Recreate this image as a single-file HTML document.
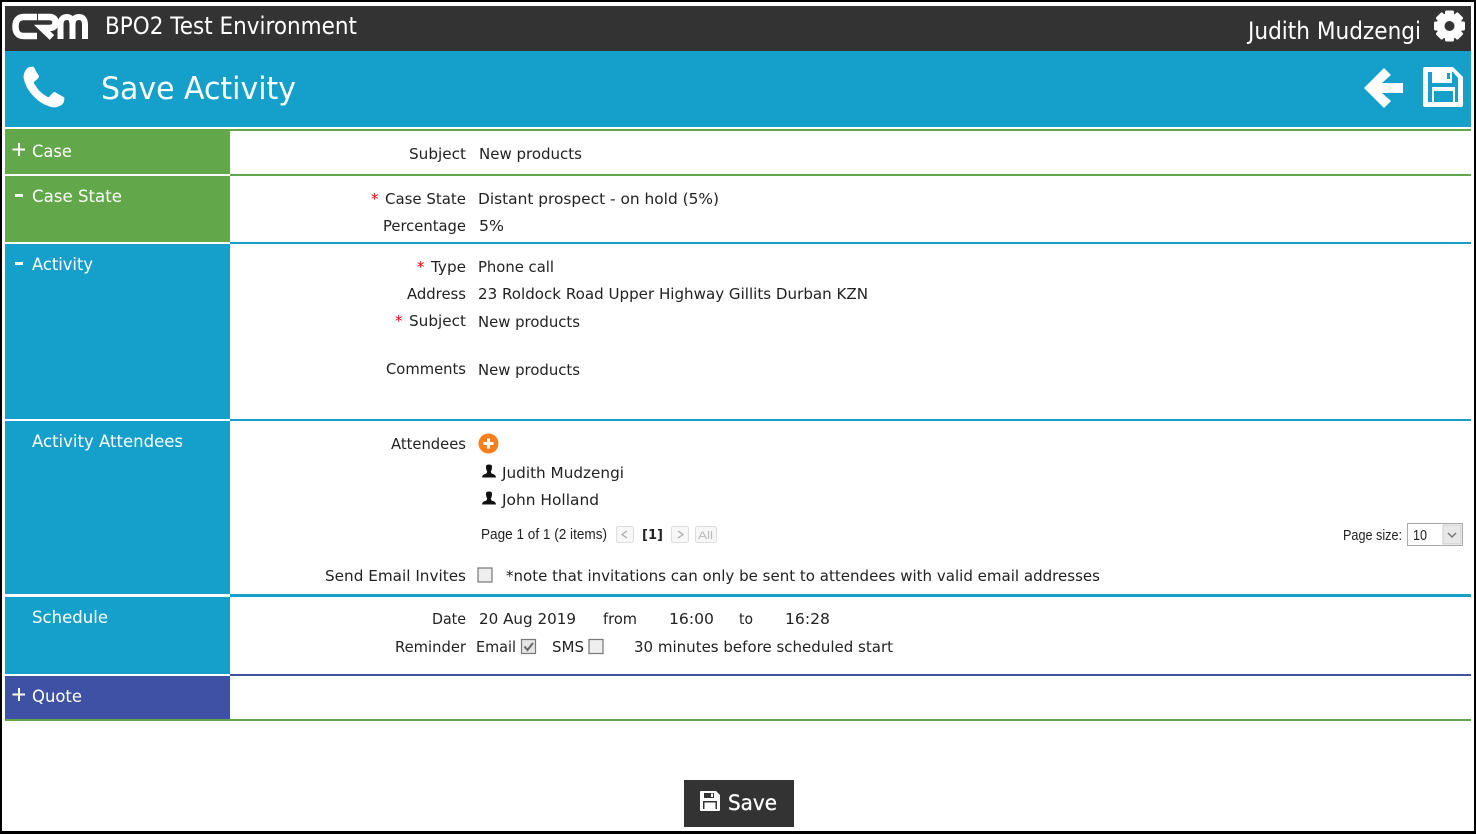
<!DOCTYPE html>
<html lang="en">
<head>
<meta charset="utf-8">
<title>Save Activity</title>
<style>
html,body{margin:0;padding:0;background:#fff;width:1476px;height:834px;overflow:hidden}
svg{display:block}
text{font-family:"DejaVu Sans",Verdana,sans-serif;font-size:14.8px;fill:#222}
.l{font-size:16.5px;fill:#fff}
.r{fill:#e00}
.n{font-family:"Liberation Sans",Arial,sans-serif;font-size:14.5px;fill:#222}
</style>
</head>
<body>
<svg width="1476" height="834" viewBox="0 0 1476 834" xmlns="http://www.w3.org/2000/svg">
<rect width="1476" height="834" fill="#000"/>
<rect x="2" y="2" width="1472" height="829" fill="#fff"/>
<rect x="5" y="6" width="1466" height="45" fill="#333"/>
<rect x="5" y="51" width="1466" height="76" fill="#15a0cb"/>

<!-- logo -->
<g fill="none" stroke="#fff" stroke-width="6.5">
<path d="M37 17H24Q15.500 17 15.500 26.500Q15.500 36 24 36H37"/>
<path d="M38 17H49Q55.500 17 55.500 22.500Q55.500 28 49 28H42L52 37.500"/>
<path d="M60.500 39V25Q60.500 17 67 17Q72.500 17 72.500 25V39M72.500 25Q72.500 17 79 17Q85 17 85 25V39" stroke-width="6"/>
</g>

<text x="105" y="34" style="font-size:24px;fill:#fff" textLength="252" lengthAdjust="spacingAndGlyphs">BPO2 Test Environment</text>
<text x="1248" y="39" style="font-size:24px;fill:#fff" textLength="173" lengthAdjust="spacingAndGlyphs">Judith Mudzengi</text>

<!-- gear -->
<g transform="translate(1449.500 26)" fill="#fff">
<circle r="9" fill="none" stroke="#fff" stroke-width="8"/>
<rect x="-4.500" y="-15.500" width="9" height="8" rx="1.500"/>
<rect x="-4.500" y="-15.500" width="9" height="8" rx="1.500" transform="rotate(45)"/>
<rect x="-4.500" y="-15.500" width="9" height="8" rx="1.500" transform="rotate(90)"/>
<rect x="-4.500" y="-15.500" width="9" height="8" rx="1.500" transform="rotate(135)"/>
<rect x="-4.500" y="-15.500" width="9" height="8" rx="1.500" transform="rotate(180)"/>
<rect x="-4.500" y="-15.500" width="9" height="8" rx="1.500" transform="rotate(225)"/>
<rect x="-4.500" y="-15.500" width="9" height="8" rx="1.500" transform="rotate(270)"/>
<rect x="-4.500" y="-15.500" width="9" height="8" rx="1.500" transform="rotate(315)"/>
</g>

<!-- phone -->
<path transform="translate(24 67) scale(.0284)" fill="#fff" stroke="#fff" stroke-width="30" d="M1408 1112q0 27-10 70.500t-21 68.500q-21 50-122 106-94 51-186 51-27 0-53-3.500t-57.500-12.500-47-14.500-55.500-20.500-49-18q-98-35-175-83-127-79-264-216t-216-264q-48-77-83-175-3-9-18-49t-20.500-55.500-14.500-47-12.500-57.500-3.500-53q0-92 51-186 56-101 106-122 25-11 68.500-21t70.500-10q14 0 21 3 18 6 53 76 11 19 30 54t35 63.500 31 53.500q3 4 17.500 25t21.500 35.500 7 28.500q0 20-28.500 50t-62 55-62 53-28.500 46q0 9 5 22.500t8.500 20.500 14 24 11.500 19q76 137 174 235t235 174q2 1 19 11.500t24 14 20.500 8.500 22.500 5q18 0 46-28.500t53-62 55-62 50-28.500q14 0 28.500 7t35.500 21.500 25 17.500q25 15 53.500 31t63.500 35 54 30q70 35 76 53 3 7 3 21z"/>

<text x="101" y="99" style="font-size:31px;fill:#fff" textLength="195" lengthAdjust="spacingAndGlyphs">Save Activity</text>

<!-- back arrow -->
<polygon fill="#fff" points="1364,88 1384,68 1391,75 1382,83 1403,83 1403,93 1382,93 1391,101 1384,108"/>

<!-- floppy -->
<path fill="#fff" d="M1425 67H1453L1463 77V105Q1463 107 1461 107H1425Q1423 107 1423 105V69Q1423 67 1425 67Z"/>
<path fill="#15a0cb" d="M1428 72H1432V83H1452V72H1453L1458 78V102H1455V87H1432V102H1428Z"/>
<rect x="1434" y="91" width="19" height="11" fill="#15a0cb"/>
<rect x="1447" y="73" width="3" height="6" fill="#15a0cb"/>

<!-- section left blocks -->
<rect x="5" y="129" width="225" height="45" fill="#62a84a"/>
<rect x="5" y="176" width="225" height="66" fill="#62a84a"/>
<rect x="5" y="244" width="225" height="175" fill="#15a0cb"/>
<rect x="5" y="421" width="225" height="173" fill="#15a0cb"/>
<rect x="5" y="597" width="225" height="77" fill="#15a0cb"/>
<rect x="5" y="676" width="225" height="43" fill="#3f51a5"/>

<!-- section rules -->
<rect x="230" y="129" width="1241" height="2" fill="#62a84a"/>
<rect x="230" y="174" width="1241" height="2" fill="#62a84a"/>
<rect x="230" y="242" width="1241" height="2" fill="#15a0cb"/>
<rect x="230" y="419" width="1241" height="2" fill="#15a0cb"/>
<rect x="230" y="594" width="1241" height="3" fill="#15a0cb"/>
<rect x="230" y="674" width="1241" height="2" fill="#3f51a5"/>
<rect x="5" y="719" width="1466" height="2" fill="#62a84a"/>

<!-- left labels -->
<path d="M12.500 149.500H25M19 143V156" stroke="#fff" stroke-width="2"/>
<text class="l" x="32" y="157" textLength="40" lengthAdjust="spacingAndGlyphs">Case</text>
<rect x="15" y="194" width="8" height="3" fill="#fff"/>
<text class="l" x="32" y="202" textLength="90" lengthAdjust="spacingAndGlyphs">Case State</text>
<rect x="15" y="262" width="8" height="3" fill="#fff"/>
<text class="l" x="32" y="270" textLength="61" lengthAdjust="spacingAndGlyphs">Activity</text>
<text class="l" x="32" y="447" textLength="151" lengthAdjust="spacingAndGlyphs">Activity Attendees</text>
<text class="l" x="32" y="623" textLength="76" lengthAdjust="spacingAndGlyphs">Schedule</text>
<path d="M12.500 694.500H25M19 688V701" stroke="#fff" stroke-width="2"/>
<text class="l" x="32" y="702" textLength="50" lengthAdjust="spacingAndGlyphs">Quote</text>

<!-- case -->
<text x="409" y="159" textLength="57" lengthAdjust="spacingAndGlyphs">Subject</text>
<text x="479" y="159" textLength="103" lengthAdjust="spacingAndGlyphs">New products</text>

<!-- case state -->
<text class="r" x="371" y="204">*</text>
<text x="385" y="204" textLength="81" lengthAdjust="spacingAndGlyphs">Case State</text>
<text x="478" y="204" textLength="241" lengthAdjust="spacingAndGlyphs">Distant prospect - on hold (5%)</text>
<text x="383" y="231" textLength="83" lengthAdjust="spacingAndGlyphs">Percentage</text>
<text x="479" y="231" textLength="25" lengthAdjust="spacingAndGlyphs">5%</text>

<!-- activity -->
<text class="r" x="417" y="272">*</text>
<text x="431" y="272" textLength="35" lengthAdjust="spacingAndGlyphs">Type</text>
<text x="478" y="272" textLength="76" lengthAdjust="spacingAndGlyphs">Phone call</text>
<text x="407" y="299" textLength="59" lengthAdjust="spacingAndGlyphs">Address</text>
<text x="478" y="299" textLength="390" lengthAdjust="spacingAndGlyphs">23 Roldock Road Upper Highway Gillits Durban KZN</text>
<text class="r" x="395" y="326">*</text>
<text x="409" y="326" textLength="57" lengthAdjust="spacingAndGlyphs">Subject</text>
<text x="478" y="327" textLength="102" lengthAdjust="spacingAndGlyphs">New products</text>
<text x="386" y="374" textLength="80" lengthAdjust="spacingAndGlyphs">Comments</text>
<text x="478" y="375" textLength="102" lengthAdjust="spacingAndGlyphs">New products</text>

<!-- attendees -->
<text x="391" y="449" textLength="75" lengthAdjust="spacingAndGlyphs">Attendees</text>
<circle cx="488.500" cy="443.500" r="10" fill="#f77f1b"/>
<path d="M483.500 443.500H493.500M488.500 438.500V448.500" stroke="#fff" stroke-width="3"/>

<g fill="#111">
<path d="M486 466.500Q486 464.500 489 464.500Q492 464.500 492 466.500Q492 470 490.800 471.500L491.500 473.500Q496 474.500 496 477.500H482Q482 474.500 486.500 473.500L487.200 471.500Q486 470 486 466.500Z"/>
<path d="M486 493.500Q486 491.500 489 491.500Q492 491.500 492 493.500Q492 497 490.800 498.500L491.500 500.500Q496 501.500 496 504.500H482Q482 501.500 486.500 500.500L487.200 498.500Q486 497 486 493.500Z"/>
</g>
<text x="502" y="478" textLength="122" lengthAdjust="spacingAndGlyphs">Judith Mudzengi</text>
<text x="502" y="505" textLength="97" lengthAdjust="spacingAndGlyphs">John Holland</text>

<text class="n" x="481" y="539" textLength="126" lengthAdjust="spacingAndGlyphs">Page 1 of 1 (2 items)</text>
<rect x="616.500" y="526.500" width="17" height="16" rx="2" fill="#f7f7f7" stroke="#ddd"/>
<path d="M627 531L622 534.500L627 538" fill="none" stroke="#aaa" stroke-width="1.200"/>
<text x="642" y="539" style="font-size:13.500px;font-weight:bold" textLength="21" lengthAdjust="spacingAndGlyphs">[1]</text>
<rect x="671.500" y="526.500" width="17" height="16" rx="2" fill="#f7f7f7" stroke="#ddd"/>
<path d="M678 531L683 534.500L678 538" fill="none" stroke="#aaa" stroke-width="1.200"/>
<rect x="695.500" y="526.500" width="21" height="16" rx="2" fill="#f7f7f7" stroke="#ddd"/>
<text class="n" x="698" y="539" style="font-size:11px;fill:#bbb" textLength="15" lengthAdjust="spacingAndGlyphs">All</text>

<text class="n" x="1343" y="540" textLength="59" lengthAdjust="spacingAndGlyphs">Page size:</text>
<rect x="1407.500" y="523.500" width="55" height="22" fill="#fff" stroke="#aaa"/>
<text class="n" x="1413" y="540" textLength="14" lengthAdjust="spacingAndGlyphs">10</text>
<rect x="1443" y="525" width="18" height="19" fill="#e8e8e8" stroke="#ccc"/>
<path d="M1448 533L1452 537L1456 533" fill="none" stroke="#777" stroke-width="1.500"/>

<text x="325" y="581" textLength="141" lengthAdjust="spacingAndGlyphs">Send Email Invites</text>
<rect x="478" y="568" width="14" height="14" fill="#eee" stroke="#777" stroke-width="1.200"/>
<text x="506" y="581" textLength="594" lengthAdjust="spacingAndGlyphs">*note that invitations can only be sent to attendees with valid email addresses</text>

<!-- schedule -->
<text x="432" y="624" textLength="34" lengthAdjust="spacingAndGlyphs">Date</text>
<text x="479" y="624" textLength="97" lengthAdjust="spacingAndGlyphs">20 Aug 2019</text>
<text x="603" y="624" textLength="34" lengthAdjust="spacingAndGlyphs">from</text>
<text x="669" y="624" textLength="45" lengthAdjust="spacingAndGlyphs">16:00</text>
<text x="739" y="624" textLength="14" lengthAdjust="spacingAndGlyphs">to</text>
<text x="785" y="624" textLength="45" lengthAdjust="spacingAndGlyphs">16:28</text>

<text x="395" y="652" textLength="71" lengthAdjust="spacingAndGlyphs">Reminder</text>
<text x="476" y="652" textLength="40" lengthAdjust="spacingAndGlyphs">Email</text>
<rect x="521.500" y="639.500" width="14" height="14" fill="#e4e4e4" stroke="#777" stroke-width="1.200"/>
<path d="M524.500 646.500L527.500 650L533 643" fill="none" stroke="#666" stroke-width="2"/>
<text x="552" y="652" textLength="32" lengthAdjust="spacingAndGlyphs">SMS</text>
<rect x="589" y="639.500" width="14" height="14" fill="#eee" stroke="#777" stroke-width="1.200"/>
<text x="634" y="652" textLength="259" lengthAdjust="spacingAndGlyphs">30 minutes before scheduled start</text>

<!-- save button -->
<rect x="684" y="780" width="110" height="47" fill="#333"/>
<path fill="#fff" d="M701 791H716L720 795V810Q720 811 719 811H701Q700 811 700 810V792Q700 791 701 791Z"/>
<rect x="703" y="801" width="14" height="8" fill="#333"/>
<rect x="704.500" y="802.500" width="11" height="6.500" fill="#fff"/>
<rect x="704" y="793" width="10" height="5" fill="#333"/>
<rect x="711" y="793.500" width="2" height="3.500" fill="#fff"/>
<text x="728" y="810" style="font-size:21.500px;fill:#fff;stroke:#fff;stroke-width:.3" textLength="49" lengthAdjust="spacingAndGlyphs">Save</text>
</svg>
</body>
</html>
